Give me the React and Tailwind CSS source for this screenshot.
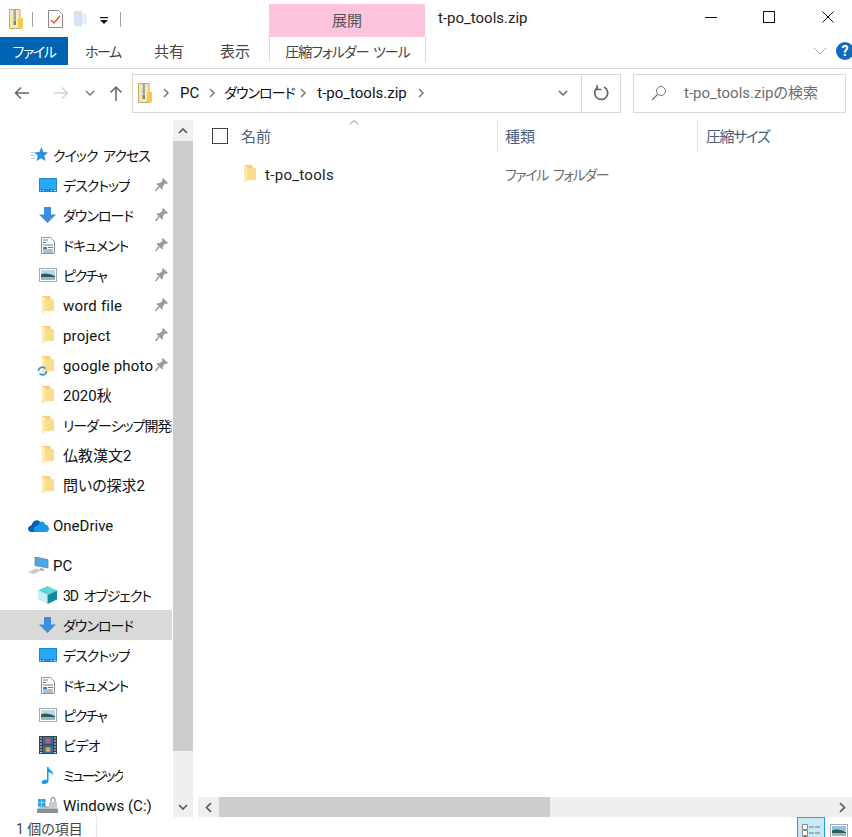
import React from 'react'

const FONT = { fontFamily: 'Roboto, "Noto Sans CJK JP", sans-serif' }

function ZipIcon() {
  return (
    <svg width="14" height="20" viewBox="0 0 14 20" className="shrink-0">
      <path d="M.5.500h10.500v19H.5z" fill="#fbe7a6" stroke="#c2ab6a" />
      <path d="M9 9h5v10.500H9z" fill="#f2c94f" />
      <path d="M4 1h3.500v14H4z" fill="#e9edf0" />
      <path d="M4.500 2h2.500M4.500 4h2.500M4.500 6h2.500M4.500 8h2.500M4.500 10h2.500" stroke="#55606a" />
      <path d="M4.500 11.500h2.500V16H4.500z" fill="#77818a" />
    </svg>
  )
}

function Folder() {
  return (
    <svg width="14" height="18" viewBox="0 0 14 18" className="shrink-0">
      <path d="M1 0h8l1 3h3v12H4l-3 2z" fill="#f4cf74" />
      <path d="M1 1h3v15l-3 2z" fill="#fde9ad" />
      <path d="M4 3h9v12H4z" fill="#f9dd8c" />
    </svg>
  )
}

function Pin() {
  return (
    <svg width="14" height="14" viewBox="0 0 14 14" className="absolute left-[155px] top-[8px]">
      <path d="M8 0l5 5-1.500 1-1.500-.5-2.200 3 .2 2-1 1L1.500 6l1-1 2 .2 3-2.200L7 1.500z" fill="#939ca4" />
      <path d="M4 8.500L.5 13" stroke="#939ca4" strokeWidth="1.500" />
    </svg>
  )
}

function Star() {
  return (
    <svg width="18" height="16" viewBox="0 0 18 16" className="shrink-0">
      <path d="M11.500 0l1.800 5 4.700.4-3.700 3.300 1.200 5.300-4.300-2.800L6.500 14l1.300-5.300L4 5.400l5.300-.3z" fill="#2a8fe0" />
      <path d="M1 5.500h4M0 8.500h5M1 11.500h4" stroke="#a6d2f2" />
    </svg>
  )
}

function Desktop() {
  return (
    <svg width="18" height="14" viewBox="0 0 18 14" className="shrink-0">
      <rect width="18" height="14" fill="#1b86d8" />
      <rect x="1" y="1" width="16" height="10" fill="#28a8f5" />
      <path d="M1 12.500h1M4 12.500h1M12 12.500h1M15 12.500h2" stroke="#d8efff" />
    </svg>
  )
}

function Down() {
  return (
    <svg width="17" height="16" viewBox="0 0 17 16" className="shrink-0">
      <path d="M5 0h7v7.500h5L8.500 16 0 7.500h5z" fill="#3a8fe0" />
    </svg>
  )
}

function Doc() {
  return (
    <svg width="14" height="17" viewBox="0 0 14 17" className="shrink-0">
      <path d="M.5.500h9l4 4v12H.5z" fill="#fff" stroke="#8b9298" />
      <path d="M2 3h5M2 5.500h3M2 8h10M7 10.500h5M2 13h10M2 15h10" stroke="#5f7f9a" />
      <path d="M2 10h4v2H2z" fill="#3d7fb5" />
    </svg>
  )
}

function Picture() {
  return (
    <svg width="18" height="14" viewBox="0 0 18 14" className="shrink-0">
      <rect x=".5" y=".5" width="17" height="13" fill="#fff" stroke="#a5a9ad" />
      <path d="M2 2h14v5H2z" fill="#b5d8f0" />
      <path d="M2 6.500c4-2 9-1 14 1.500v1H2z" fill="#2f5f4c" />
      <path d="M2 9h14v3H2z" fill="#8fb8cf" />
    </svg>
  )
}

function Cloud() {
  return (
    <svg width="21" height="14" viewBox="0 0 21 14" className="shrink-0">
      <path d="M4 14c-5 0-5-6-.5-6.500C4.500 3 9 1 12 4c3-1.500 5 .5 5 2.500 2-.5 4 2 4 4.500 0 2-1.500 3-3 3z" fill="#1a9be8" />
      <path d="M4 14c-5 0-5-6-.5-6.500C4.500 3 9 1 12 4l-2 3.500C8 7.500 6 9 6 11c0 1 .5 2.500 1.500 3z" fill="#0a5fb0" />
    </svg>
  )
}

function Computer() {
  return (
    <svg width="21" height="17" viewBox="0 0 21 17" className="shrink-0">
      <path d="M7 0l13 2.500v8.500L7 8.500z" fill="#4aa7ea" stroke="#6b7880" strokeWidth=".7" />
      <path d="M0 15l8-3.500 6 1.500-8 4z" fill="#c7ccd0" />
      <path d="M12 11l4 1v2l-4-1z" fill="#9da4a9" />
    </svg>
  )
}

function Cube() {
  return (
    <svg width="19" height="18" viewBox="0 0 19 18" className="shrink-0">
      <path d="M9.500 0L19 4.500 9.500 9 0 4.500z" fill="#5fd5dd" />
      <path d="M0 4.500L9.500 9v9L0 13.500z" fill="#c5f1f3" />
      <path d="M19 4.500L9.500 9v9l9.500-4.500z" fill="#138a9c" />
    </svg>
  )
}

function Film() {
  return (
    <svg width="18" height="18" viewBox="0 0 18 18" className="shrink-0">
      <rect width="18" height="18" fill="#3b3f43" />
      <path d="M1 2h2M1 5h2M1 8h2M1 11h2M1 14h2M1 16.500h2M15 2h2M15 5h2M15 8h2M15 11h2M15 14h2M15 16.500h2" stroke="#d8dade" />
      <rect x="4" y="1" width="10" height="7.500" fill="#2f6fb0" />
      <rect x="4" y="9.500" width="10" height="7.500" fill="#2f6fb0" />
      <circle cx="9" cy="5" r="2.500" fill="#e0563b" />
      <circle cx="9" cy="13.500" r="2.500" fill="#e9a33b" />
    </svg>
  )
}

function Music() {
  return (
    <svg width="14" height="17" viewBox="0 0 14 17" className="shrink-0">
      <path d="M6 0h1.500c.3 3 5.500 4 4.500 8-1-2-3-2.500-4.500-2.700V14c0 2-2 3-4.500 3C.5 17 0 15.500 1 14.200 2 13 4.500 12.500 6 13z" fill="#1a9be8" />
    </svg>
  )
}

function Drive() {
  return (
    <svg width="21" height="18" viewBox="0 0 21 18" className="shrink-0">
      <path d="M0 13l4-3h14l3 3v4H0z" fill="#b6bcc0" />
      <path d="M0 13h21v4H0z" fill="#8b9196" />
      <path d="M1 3h3.500v3.500H1zM5 3h3.500v3.500H5zM1 7h3.500v3.500H1zM5 7h3.500v3.500H5z" fill="#1fa0e8" />
      <path d="M12 6h8v6h-8z" fill="#c6ccd0" />
      <path d="M14 6V3.500a2 2 0 0 1 4 0V6" fill="none" stroke="#9aa1a6" strokeWidth="1.300" />
    </svg>
  )
}

function GooglePhotosFolder() {
  return (
    <div className="relative w-[14px] h-[18px] shrink-0">
      <Folder />
      <svg width="11" height="10" viewBox="0 0 11 10" className="absolute -left-[4px] top-[10px]">
        <path d="M1.500 5a4 4 0 0 1 7-2.500M9.500 5a4 4 0 0 1-7 2.500" fill="none" stroke="#3a8fe0" strokeWidth="1.600" />
      </svg>
    </div>
  )
}

function NavRow({ icon, label, pinned, top, selected, tight = '' }) {
  return (
    <div className={`relative h-[30px] flex items-center shrink-0 ${selected ? 'bg-[#d9d9d9]' : ''}`}>
      <div className={`absolute flex justify-center ${top ? 'left-[28px] w-[21px]' : 'left-[38px] w-[19px]'}`}>{icon}</div>
      <span className={`whitespace-nowrap overflow-hidden pt-[2px] ${tight} ${top ? 'ml-[53px]' : 'ml-[63px]'} ${pinned ? 'max-w-[90px]' : 'max-w-[109px]'}`}>{label}</span>
      {pinned && <Pin />}
    </div>
  )
}

function Chevron({ d, className }) {
  return (
    <svg width="12" height="12" viewBox="0 0 12 12" className={className}>
      <path d={d} fill="none" stroke="currentColor" strokeWidth="1.500" />
    </svg>
  )
}

const RIGHT = 'M4 2l4 4-4 4'
const DOWN = 'M2 4l4 4 4-4'
const KANA = 'text-[14px] tracking-[-1px]'

export default function App() {
  return (
    <div style={FONT} className='w-[852px] h-[837px] flex flex-col overflow-hidden bg-white text-[15px] [font-feature-settings:"palt"] text-[#111]'>
      {/* title bar */}
      <div className="h-[37px] flex shrink-0">
        <div className="w-[269px] flex items-center pl-[9px] pt-[1px]">
          <ZipIcon />
          <div className="w-px h-[15px] bg-[#a0a0a0] ml-[9px]" />
          <svg width="15" height="18" viewBox="0 0 15 18" className="ml-[15px]">
            <path d="M.5.500h10l4 4v13H.5z" fill="#fff" stroke="#8b8b8b" />
            <path d="M3 10l3 3 6-7" fill="none" stroke="#e8562a" strokeWidth="1.500" />
          </svg>
          <svg width="13" height="18" viewBox="0 0 13 18" className="ml-[11px]">
            <path d="M0 1h8v16l-8-1z" fill="#d5e3f2" />
            <path d="M8 4h5v10H8z" fill="#e6eef7" />
          </svg>
          <svg width="8" height="7" viewBox="0 0 8 7" className="ml-[13px] mt-[2px]">
            <path d="M0 0h8v1.300H0zM0 3h8L4 7z" fill="#111" />
          </svg>
          <div className="w-px h-[15px] bg-[#a0a0a0] ml-[12px]" />
        </div>
        <div className="w-[156px] mt-[4px] bg-[#fec3dd] flex items-center justify-center pt-[1px] text-[#555]">展開</div>
        <div className="ml-[13px] flex items-center text-[#222]">t-po_tools.zip</div>
        <div className="ml-auto flex items-center pb-[3px] text-black">
          <svg width="12" height="1" className="mr-[46px]"><rect width="12" height="1" fill="#111" /></svg>
          <svg width="12" height="12" className="mr-[47px]"><rect x=".5" y=".5" width="11" height="11" fill="none" stroke="#111" /></svg>
          <svg width="12" height="12" className="mr-[18px]"><path d="M.5.500l11 11M11.500.500l-11 11" stroke="#111" fill="none" /></svg>
        </div>
      </div>

      {/* ribbon tabs */}
      <div className="h-[32px] shrink-0 flex border-b border-[#dadada] pb-[3px] text-[#444]">
        <div className="w-[68px] h-[28px] bg-[#0063b1] text-white flex items-center justify-center text-[14px] tracking-[-1.4px] pt-[2px]">ファイル</div>
        <div className="ml-[17px] flex items-center w-[69px] text-[14px] tracking-[-1.5px] pt-[3px]">ホーム</div>
        <div className="flex items-center w-[66px] pt-[3px]">共有</div>
        <div className="flex items-center w-[49px] pt-[3px]">表示</div>
        <div className="w-[157px] h-[25px] border-x border-[#dadada] flex items-center justify-center whitespace-nowrap text-[14px] tracking-[-1px] [word-spacing:2px] pt-[6px]">圧縮フォルダー ツール</div>
        <div className="ml-auto flex items-center gap-[9px] -mr-[2px] h-[28px]">
          <svg width="14" height="8" viewBox="0 0 14 8"><path d="M1 1l6 6 6-6" fill="none" stroke="#b0b0b0" /></svg>
          <div className="w-[18px] h-[18px] rounded-full bg-[#0f6cc0] text-white font-bold text-[14px] leading-[18px] text-center">?</div>
        </div>
      </div>

      {/* address row */}
      <div className="h-[51px] shrink-0 flex items-center pb-[3px]">
        <svg width="16" height="14" viewBox="0 0 16 14" className="ml-[14px] text-[#666]"><path d="M15 7H2M7 1.500L1.500 7 7 12.500" fill="none" stroke="currentColor" strokeWidth="1.500" /></svg>
        <svg width="16" height="14" viewBox="0 0 16 14" className="ml-[23px] text-[#d4d4d4]"><path d="M1 7h13M9 1.500L14.500 7 9 12.500" fill="none" stroke="currentColor" strokeWidth="1.500" /></svg>
        <Chevron d={DOWN} className="ml-[15px] text-[#777]" />
        <svg width="14" height="16" viewBox="0 0 14 16" className="ml-[13px] text-[#666]"><path d="M7 16V2M1.500 7.500L7 2l5.500 5.500" fill="none" stroke="currentColor" strokeWidth="1.500" /></svg>
        <div className="ml-[9px] w-[489px] h-[39px] border border-[#d9d9d9] flex items-center">
          <div className="ml-[5px]"><ZipIcon /></div>
          <Chevron d={RIGHT} className="ml-[8px] text-[#777]" />
          <span className="ml-[8px] pt-[1px]">PC</span>
          <Chevron d={RIGHT} className="ml-[7px] text-[#777]" />
          <span className={`ml-[6px] pt-[1px] w-[66px] whitespace-nowrap ${KANA}`}>ダウンロード</span>
          <Chevron d={RIGHT} className="ml-[7px] text-[#777]" />
          <span className="ml-[8px] pt-[1px]">t-po_tools.zip</span>
          <Chevron d={RIGHT} className="ml-[8px] text-[#777]" />
          <Chevron d={DOWN} className="ml-auto mr-[12px] text-[#666]" />
          <div className="w-[39px] h-full border-l border-[#d9d9d9] flex items-center justify-center">
            <svg width="16" height="16" viewBox="0 0 16 16"><path d="M5 2.300a6.500 6.500 0 1 0 6-.2" fill="none" stroke="#666" strokeWidth="1.700" /><path d="M4 0v4.500h4.500" fill="none" stroke="#666" strokeWidth="1.500" /></svg>
          </div>
        </div>
        <div className="ml-[12px] w-[213px] h-[39px] border border-[#d9d9d9] flex items-center text-[#6d6d6d]">
          <svg width="16" height="16" viewBox="0 0 16 16" className="ml-[17px]"><circle cx="10" cy="6" r="4.500" fill="none" stroke="#777" /><path d="M6.500 9.500L1 15" stroke="#777" strokeWidth="1.300" /></svg>
          <span className="ml-[17px] pt-[1px] whitespace-nowrap">t-po_tools.zipの検索</span>
        </div>
      </div>

      {/* main */}
      <div className="flex-1 flex min-h-0">
        <div className="w-[172px] pt-[20px] flex flex-col overflow-hidden text-[#111] shrink-0">
          <NavRow top icon={<Star />} label="クイック アクセス" tight={`${KANA} [word-spacing:3px]`} />
          <NavRow icon={<Desktop />} label="デスクトップ" tight={KANA} pinned />
          <NavRow icon={<Down />} label="ダウンロード" tight={KANA} pinned />
          <NavRow icon={<Doc />} label="ドキュメント" tight={KANA} pinned />
          <NavRow icon={<Picture />} label="ピクチャ" tight="text-[14px] tracking-[-1.5px]" pinned />
          <NavRow icon={<Folder />} label="word file" tight="tracking-[0.2px]" pinned />
          <NavRow icon={<Folder />} label="project" tight="tracking-[0.2px]" pinned />
          <NavRow icon={<GooglePhotosFolder />} label="google photos" tight="tracking-[0.2px]" pinned />
          <NavRow icon={<Folder />} label="2020秋" />
          <NavRow icon={<Folder />} label="リーダーシップ開発論" tight={KANA} />
          <NavRow icon={<Folder />} label="仏教漢文2" />
          <NavRow icon={<Folder />} label="問いの探求2" />
          <div className="h-[10px] shrink-0" />
          <NavRow top icon={<Cloud />} label="OneDrive" />
          <div className="h-[10px] shrink-0" />
          <NavRow top icon={<Computer />} label="PC" />
          <NavRow icon={<Cube />} label="3D オブジェクト" tight={`${KANA} [word-spacing:3px]`} />
          <NavRow selected icon={<Down />} label="ダウンロード" tight={KANA} />
          <NavRow icon={<Desktop />} label="デスクトップ" tight={KANA} />
          <NavRow icon={<Doc />} label="ドキュメント" tight={KANA} />
          <NavRow icon={<Picture />} label="ピクチャ" tight="text-[14px] tracking-[-1.5px]" />
          <NavRow icon={<Film />} label="ビデオ" tight="text-[14px] tracking-[-0.5px]" />
          <NavRow icon={<Music />} label="ミュージック" tight="text-[14px] tracking-[-2.3px]" />
          <NavRow icon={<Drive />} label="Windows (C:)" />
        </div>

        {/* nav scrollbar */}
        <div className="w-[20px] ml-[1px] h-[697px] bg-[#efefef] flex flex-col shrink-0">
          <div className="h-[21px] flex items-center justify-center bg-[#f0f0f0]">
            <svg width="10" height="6" viewBox="0 0 10 6"><path d="M1 5l4-4 4 4" fill="none" stroke="#5a5a5a" strokeWidth="1.700" /></svg>
          </div>
          <div className="h-[610px] bg-[#cdcdcd]" />
          <div className="h-[46px]" />
          <div className="h-[20px] flex items-center justify-center">
            <svg width="10" height="6" viewBox="0 0 10 6"><path d="M1 1l4 4 4-4" fill="none" stroke="#5a5a5a" strokeWidth="1.700" /></svg>
          </div>
        </div>

        {/* file list */}
        <div className="flex-1 min-w-0 h-[697px] flex flex-col">
          <div className="relative h-[32px] flex shrink-0 text-[#4c607a]">
            <svg width="10" height="5" viewBox="0 0 10 5" className="absolute left-[156px] top-[0px]"><path d="M.5 4.500L5 .5l4.500 4" fill="none" stroke="#8a8a8a" /></svg>
            <div className="w-[305px] border-r border-[#e5e5e5] flex items-center pl-[19px]">
              <div className="w-[16px] h-[16px] border border-[#444] shrink-0" />
              <span className="ml-[13px] pt-[2px]">名前</span>
            </div>
            <div className="w-[200px] border-r border-[#e5e5e5] flex items-center pl-[7px] pt-[2px]">種類</div>
            <div className="flex items-center pl-[8px] pt-[2px] whitespace-nowrap tracking-[-1.5px]">圧縮サイズ</div>
          </div>
          <div className="flex h-[44px] items-center shrink-0">
            <div className="w-[305px] flex items-center pl-[50px] text-[#222]">
              <Folder />
              <span className="ml-[8px] pt-[2px] tracking-[0.3px]">t-po_tools</span>
            </div>
            <div className="pl-[7px] pt-[2px] text-[#6d6d6d] whitespace-nowrap text-[14px] tracking-[-1.4px] [word-spacing:3px]">ファイル フォルダー</div>
          </div>
          <div className="flex-1" />
          <div className="h-[20px] ml-[5px] flex bg-[#efefef] shrink-0">
            <div className="w-[21px] flex items-center justify-center">
              <svg width="7" height="11" viewBox="0 0 7 11"><path d="M6 1L1.500 5.500 6 10" fill="none" stroke="#5a5a5a" strokeWidth="1.700" /></svg>
            </div>
            <div className="w-[331px] bg-[#cdcdcd]" />
            <div className="ml-auto w-[20px] flex items-center justify-center">
              <svg width="7" height="11" viewBox="0 0 7 11"><path d="M1 1l4.500 4.500L1 10" fill="none" stroke="#5a5a5a" strokeWidth="1.700" /></svg>
            </div>
          </div>
        </div>
      </div>

      {/* status bar */}
      <div className="h-[20px] shrink-0 flex items-start text-[#444] overflow-hidden">
        <div className="w-[97px] pl-[16px] pt-[4px] h-full border-r border-[#e8e8e8] flex items-center whitespace-nowrap text-[14px]">1 個の項目</div>
        <div className="ml-auto w-[28px] h-[26px] border border-[#26a0da] bg-[#cbe8f6] flex justify-center pt-[6px]">
          <svg width="18" height="18" viewBox="0 0 18 18">
            <path d="M.5.500h5v5h-5zM.5 6.500h5v5h-5zM.5 12.500h5v5h-5z" fill="#fff" stroke="#888" />
            <path d="M7 3h5M13 3h5M7 9h5M13 9h5M7 15h5M13 15h5" stroke="#777" />
          </svg>
        </div>
        <div className="ml-[5px] mr-[4px] mt-[7px]">
          <svg width="18" height="14" viewBox="0 0 18 14">
            <rect x=".5" y=".5" width="17" height="13" fill="#fff" stroke="#a5a9ad" />
            <path d="M2 2h14v5H2z" fill="#8fc3ee" />
            <path d="M2 6.500c4-2 9-1 14 1.500v1H2z" fill="#2f5f4c" />
            <path d="M2 9h14v3H2z" fill="#8fb8cf" />
          </svg>
        </div>
      </div>
    </div>
  )
}
